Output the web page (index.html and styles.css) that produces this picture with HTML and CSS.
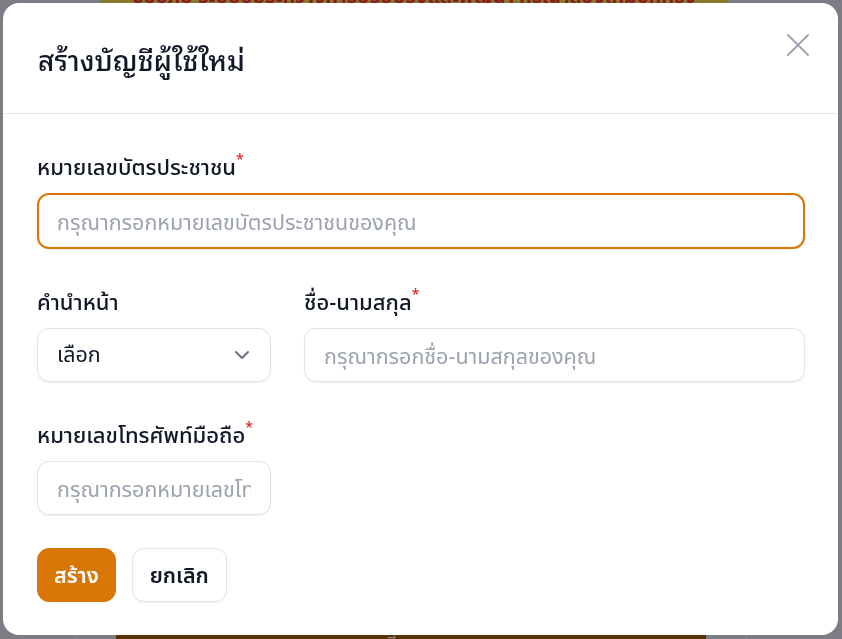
FILE: index.html
```html
<!DOCTYPE html>
<html lang="th">
<head>
<meta charset="utf-8">
<title>สร้างบัญชีผู้ใช้ใหม่</title>
<link rel="stylesheet" href="styles.css">
</head>
<body>
<div class="page">
  <div class="topbar"><span class="topbar-text">ขออภัย ระบบอยู่ระหว่างการปรับปรุงและพัฒนา กรุณาลองใหม่อีกครั้ง</span></div>
  <div class="bottom-wrap"><div class="bottombar"><span class="bottombar-text">ลงทะเบียน</span></div></div>
</div>

<div class="overlay">
  <div class="modal">
    <div class="modal-header">
      <h2 class="modal-title">สร้างบัญชีผู้ใช้ใหม่</h2>
      <button class="close-btn" type="button" aria-label="ปิด">
        <svg width="22" height="22" viewBox="0 0 22 22" fill="none" stroke="currentColor" stroke-width="1.8" stroke-linecap="round"><path d="M1 1L21 21M21 1L1 21"/></svg>
      </button>
    </div>
    <div class="modal-body">
      <div class="field">
        <label class="label">หมายเลขบัตรประชาชน<span class="req">*</span></label>
        <input class="input input-focus" type="text" placeholder="กรุณากรอกหมายเลขบัตรประชาชนของคุณ">
      </div>
      <div class="grid">
        <div class="field">
          <label class="label">คำนำหน้า</label>
          <div class="select">
            <span class="select-value">เลือก</span>
            <svg class="chevron" width="16" height="10" viewBox="0 0 16 10" fill="none" stroke="currentColor" stroke-width="2" stroke-linecap="round" stroke-linejoin="round"><path d="M2 2L8 8L14 2"/></svg>
          </div>
        </div>
        <div class="field span-2">
          <label class="label">ชื่อ-นามสกุล<span class="req">*</span></label>
          <input class="input" type="text" placeholder="กรุณากรอกชื่อ-นามสกุลของคุณ">
        </div>
      </div>
      <div class="grid">
        <div class="field">
          <label class="label">หมายเลขโทรศัพท์มือถือ<span class="req">*</span></label>
          <input class="input" type="text" placeholder="กรุณากรอกหมายเลขโทรศัพท์มือถือของคุณ">
        </div>
      </div>
      <div class="actions">
        <button class="btn btn-primary" type="button">สร้าง</button>
        <button class="btn btn-secondary" type="button">ยกเลิก</button>
      </div>
    </div>
  </div>
</div>
</body>
</html>
```
FILE: styles.css
```css
* { box-sizing: border-box; }
html, body { margin: 0; padding: 0; height: 100%; }
body {
  background: #7c7d84;
  font-family: "Noto Sans", "Noto Sans Thai", sans-serif;
  color: #111827;
  overflow: hidden;
}
.page {
  height: 100vh;
  display: flex;
  flex-direction: column;
  justify-content: space-between;
}
.topbar {
  margin: 0 114px 0 100px;
  height: 6px;
  overflow: hidden;
  background: #857a2e;
  display: flex;
  align-items: flex-end;
  justify-content: center;
}
.topbar-text {
  color: #8a1c1c;
  font-size: 20px;
  font-weight: 700;
  line-height: 20px;
  white-space: nowrap;
}
.bottom-wrap {
  margin: 0 95px 0 75px;
  border-left: 1px solid #8a8b91;
  border-right: 1px solid #8a8b91;
  padding: 0 40px;
}
.bottombar {
  height: 5px;
  overflow: hidden;
  background: #573207;
  display: flex;
  justify-content: center;
  align-items: flex-start;
}
.bottombar-text {
  color: #8e8a86;
  font-size: 18px;
  line-height: 18px;
  margin-left: -60px;
}
.overlay {
  position: fixed;
  inset: 0;
  padding: 3px 4px 4px 3px;
}
.modal {
  height: 100%;
  background: #fff;
  border-radius: 16px;
  display: flex;
  flex-direction: column;
  overflow: hidden;
}
.modal-header {
  display: flex;
  justify-content: space-between;
  align-items: flex-start;
  padding: 37px 29px 36px 35px;
  border-bottom: 1px solid #e5e7eb;
}
.modal-title {
  margin: 0;
  font-family: "Noto Sans Thai Looped", "Noto Sans", sans-serif;
  font-size: 28px;
  line-height: 37px;
  font-weight: 500;
  color: #111827;
}
.close-btn {
  margin-top: -6px;
  padding: 0;
  border: 0;
  background: none;
  color: #9ca3af;
  display: flex;
}
.modal-body {
  padding: 38px 33px 32px 34px;
  display: flex;
  flex-direction: column;
  gap: 38px;
}
.field {
  display: flex;
  flex-direction: column;
  gap: 13px;
  min-width: 0;
}
.label {
  font-size: 22px;
  line-height: 28px;
  font-weight: 500;
  color: #111827;
}
.req {
  color: #dc2626;
  font-size: 14px;
  vertical-align: top;
  line-height: 14px;
}
.input {
  width: 100%;
  height: 54px;
  padding: 0 19px;
  font-family: inherit;
  font-size: 21.5px;
  color: #111827;
  background: #fff;
  border: 1px solid #e1e3e7;
  border-radius: 12px;
  box-shadow: 0 1px 2px rgba(0,0,0,0.06);
  outline: none;
}
.input::placeholder { color: #9ca3af; }
.input-focus {
  height: 56px;
  border: 2px solid #d97706;
  padding: 0 18px;
}
.grid {
  display: grid;
  grid-template-columns: repeat(3, 1fr);
  column-gap: 33px;
}
.span-2 { grid-column: span 2; }
.select {
  height: 54px;
  padding: 0 20px 0 19px;
  display: flex;
  align-items: center;
  justify-content: space-between;
  border: 1px solid #e1e3e7;
  border-radius: 12px;
  box-shadow: 0 1px 2px rgba(0,0,0,0.06);
  font-size: 21.5px;
  color: #111827;
}
.chevron { color: #6b7280; }
.actions {
  display: flex;
  gap: 16px;
  margin-top: -5px;
}
.btn {
  font-family: inherit;
  font-size: 21.5px;
  line-height: 28px;
  font-weight: 600;
  border-radius: 12px;
  padding: 12px 17px;
  cursor: pointer;
}
.btn-primary {
  background: #d97706;
  color: #fff;
  border: 1px solid #d97706;
  padding: 12px 16px;
}
.btn-secondary {
  background: #fff;
  color: #111827;
  border: 1px solid #e1e3e7;
  box-shadow: 0 1px 2px rgba(0,0,0,0.06);
}
```
